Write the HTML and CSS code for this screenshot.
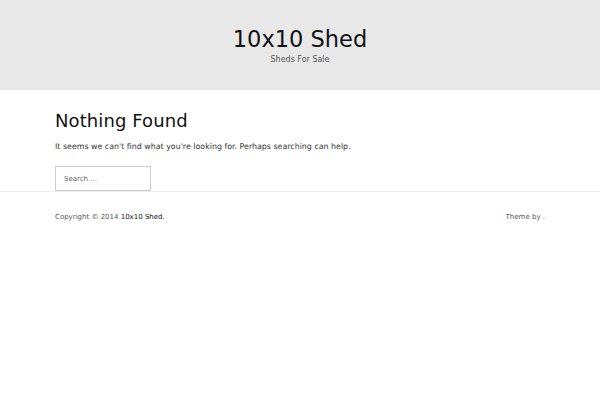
FILE: index.html
```html
<!DOCTYPE html>
<html lang="en">
<head>
  <meta charset="UTF-8">
  <meta name="viewport" content="width=device-width, initial-scale=1.0">
  <title>Nothing Found | 10x10 Shed</title>
  <link rel="stylesheet" href="styles.css">
</head>
<body>
  <header class="site-header">
    <h1 class="site-title">10x10 Shed</h1>
    <p class="site-description">Sheds For Sale</p>
  </header>

  <main class="content">
    <h2 class="page-title">Nothing Found</h2>
    <p class="notice">It seems we can't find what you're looking for. Perhaps searching can help.</p>
    <form class="search-form">
      <input type="search" class="search-field" placeholder="Search …">
    </form>
  </main>

  <footer class="site-footer">
    <div class="footer-inner">
      <span class="copyright">Copyright © 2014 <a href="#">10x10 Shed</a>.</span>
      <span class="credit">Theme by .</span>
    </div>
  </footer>
</body>
</html>
```

FILE: styles.css
```css
body {
  margin: 0;
  font-family: 'DejaVu Sans', Verdana, sans-serif;
  color: #333;
  background: #fff;
}
a {
  color: #111;
  text-decoration: none;
}
.site-header {
  background: #e8e8e8;
  height: 90px;
  box-sizing: border-box;
  padding-top: 26px;
  text-align: center;
}
.site-title {
  margin: 0;
  font-size: 22.5px;
  font-weight: normal;
  line-height: 26px;
  color: #111;
}
.site-description {
  margin: 2px 0 0;
  font-size: 8px;
  line-height: 12px;
  color: #555;
}
.content {
  width: 490px;
  margin: 0 auto;
  padding-top: 20px;
}
.page-title {
  margin: 0;
  font-size: 18px;
  font-weight: normal;
  line-height: 22px;
  letter-spacing: 0.1px;
  color: #111;
}
.notice {
  margin: 9px 0 0;
  font-size: 7.9px;
  line-height: 12px;
  color: #333;
}
.search-form {
  margin-top: 13px;
}
.search-field {
  display: block;
  width: 96px;
  height: 25px;
  box-sizing: border-box;
  margin: 0;
  padding: 0 8px;
  border: 1px solid #ccc;
  border-radius: 0;
  font-family: inherit;
  font-size: 7px;
  color: #555;
  background: #fff;
  -webkit-appearance: none;
  appearance: none;
}
.search-field::placeholder {
  color: #666;
}
.site-footer {
  border-top: 1px solid #eee;
}
.footer-inner {
  width: 490px;
  margin: 0 auto;
  padding-top: 19px;
  display: flex;
  justify-content: space-between;
  font-size: 7px;
  line-height: 12px;
  color: #555;
}
```
